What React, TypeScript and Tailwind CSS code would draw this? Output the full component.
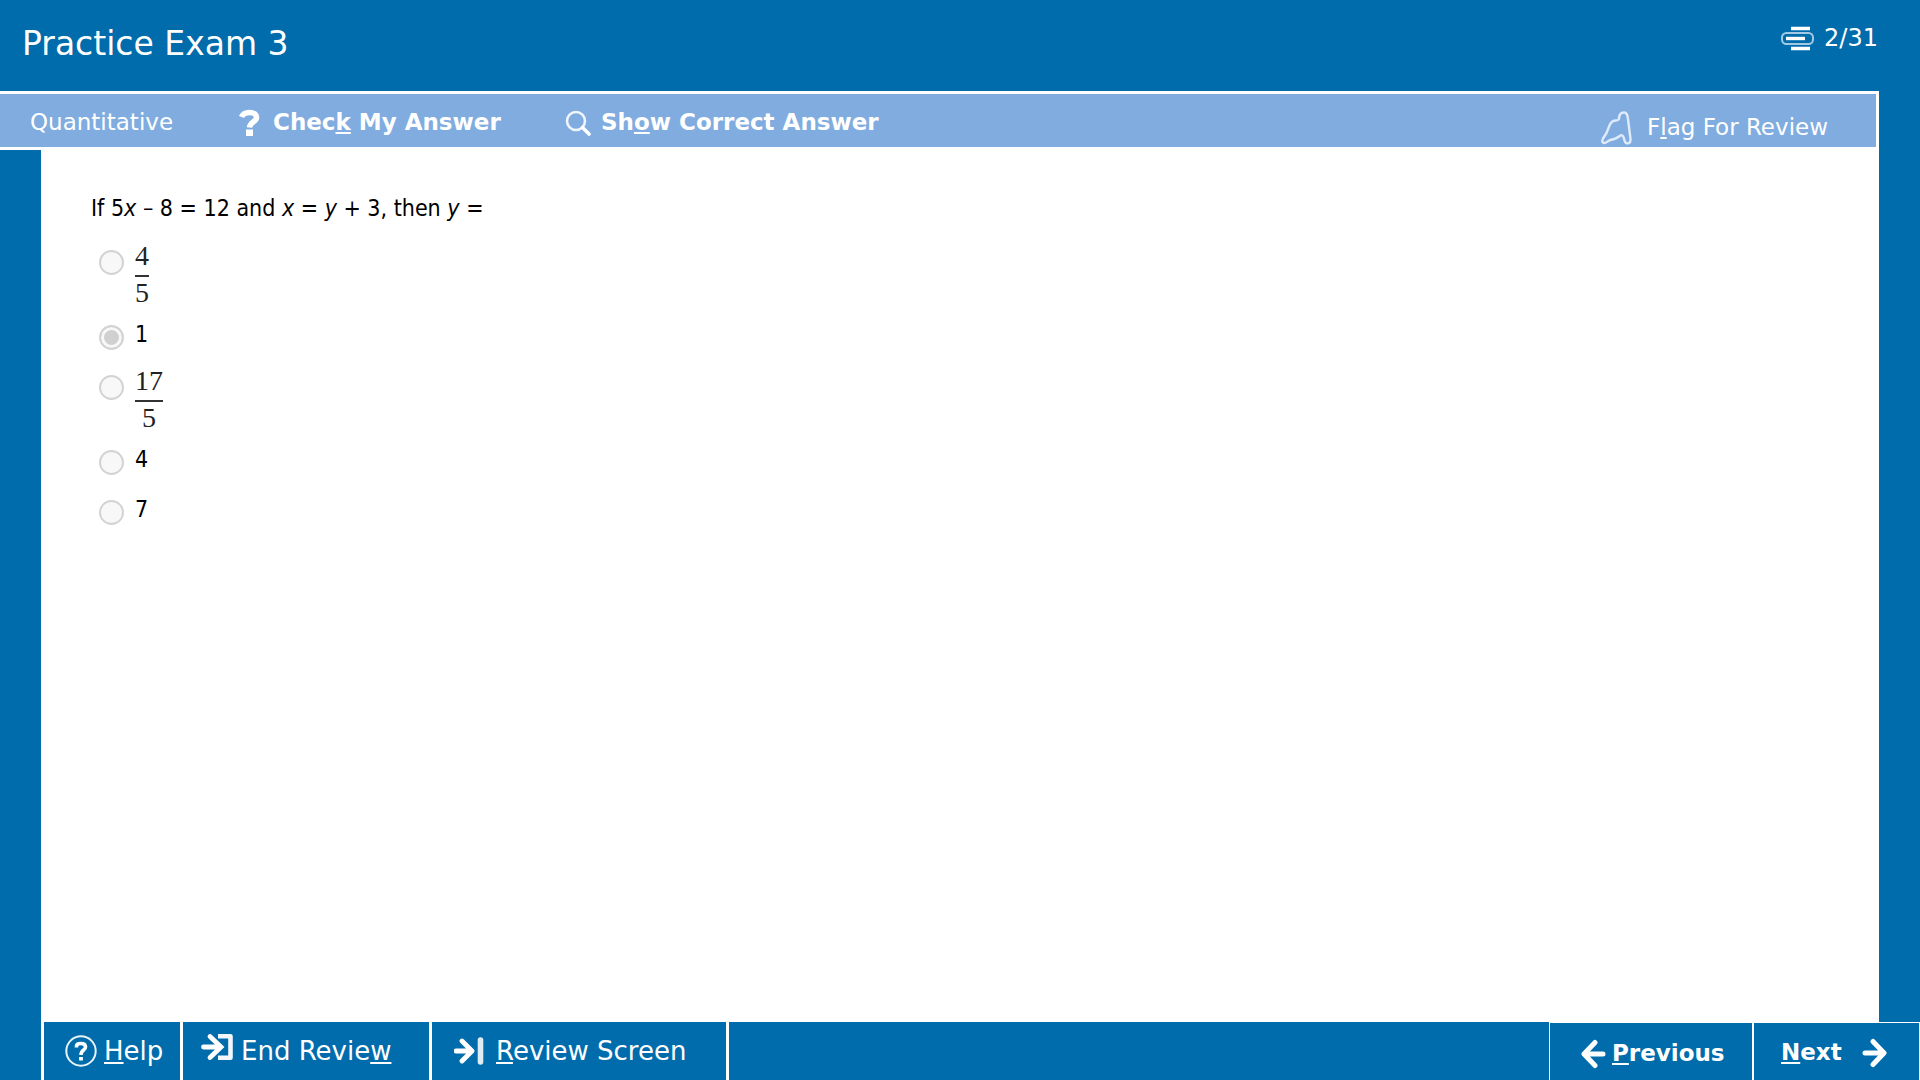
import React from 'react';

const choices = [
  { id: 'a', numerator: '4', denominator: '5' },
  { id: 'b', text: '1' },
  { id: 'c', numerator: '17', denominator: '5' },
  { id: 'd', text: '4' },
  { id: 'e', text: '7' },
];

const CounterIcon = () => (
  <svg width="34" height="28" viewBox="0 0 34 28" fill="none" aria-hidden="true">
    <path d="M11 4.5H30M11 24.5H30" stroke="#fff" strokeWidth="3.6" />
    <rect x="2" y="9" width="31" height="11" rx="4.5" stroke="#a3c9e2" strokeWidth="2" />
    <path d="M6 14.5H25" stroke="#fff" strokeWidth="3.4" />
  </svg>
);

const QuestionIcon = () => (
  <svg width="22" height="28" viewBox="0 0 22 28" fill="none" aria-hidden="true">
    <path d="M2.5 8C4 4.5 7 3.5 10.5 3.5C15 3.5 17.5 5.5 17.5 8.5C17.5 13 11 12.5 10.5 18.5" stroke="#fff" strokeWidth="5.6" />
    <rect x="7" y="20.5" width="7" height="6.5" fill="#fff" />
  </svg>
);

const SearchIcon = () => (
  <svg width="26" height="26" viewBox="0 0 26 26" fill="none" aria-hidden="true">
    <circle cx="11" cy="11" r="9" stroke="#eff5fc" strokeWidth="2.6" />
    <path d="M17.5 17.5L24 24" stroke="#fff" strokeWidth="3.6" strokeLinecap="round" />
  </svg>
);

const FlagIcon = () => (
  <svg width="32" height="34" viewBox="0 0 32 34" fill="none" aria-hidden="true">
    <path
      d="M18 8C18 3 20 1.5 23 1.5C26 1.5 26.5 4 27 8L29.5 28C30 32.5 26 33.5 24 31L22.5 26C21.5 23.5 20 24 18 25.5C15 28 12 28.5 9 29L5 31.5C1.5 33 .5 30.5 2 27.5L5.5 22L8.5 14.5C10 10.5 12 9.5 15 9.5C16.5 9.5 17.5 9 18 8Z"
      stroke="#dfeafa"
      strokeWidth="2.4"
      strokeLinejoin="round"
    />
  </svg>
);

const HelpIcon = () => (
  <svg width="32" height="32" viewBox="0 0 32 32" fill="none" aria-hidden="true">
    <circle cx="16" cy="16" r="14.7" stroke="#eaf3f8" strokeWidth="2" />
    <path d="M11.5 12.5V11C11.5 9 13.5 8.5 16 8.5C19 8.5 20.5 9.5 20.5 12C20.5 15.5 16 14.5 16 20" stroke="#fff" strokeWidth="3.6" />
    <path d="M16 22V25.5" stroke="#fff" strokeWidth="3.8" />
  </svg>
);

const EndIcon = () => (
  <svg width="33" height="28" viewBox="0 0 33 28" fill="none" aria-hidden="true">
    <path d="M2.5 14H19M9 3.5L20 14L9 24.5" stroke="#fff" strokeWidth="4.8" strokeLinecap="round" />
    <path d="M17 3.3H29.5V24.7H17" stroke="#f1f7fa" strokeWidth="4.6" strokeLinejoin="round" />
  </svg>
);

const ReviewIcon = () => (
  <svg width="30" height="28" viewBox="0 0 30 28" fill="none" aria-hidden="true">
    <path d="M2 14H17M8 4L18 14L8 24" stroke="#fff" strokeWidth="4.8" strokeLinecap="round" strokeLinejoin="round" />
    <path d="M26.5 3V25" stroke="#dcebf4" strokeWidth="5.6" strokeLinecap="round" />
  </svg>
);

const ArrowIcon = ({ left = false }: { left?: boolean }) => (
  <svg width="26" height="30" viewBox="0 0 26 30" fill="none" className={left ? 'rotate-180' : ''} aria-hidden="true">
    <path d="M3 15H20M11 3.5L22 15L11 26.5" stroke="#fff" strokeWidth="5" strokeLinecap="round" strokeLinejoin="round" />
  </svg>
);

const Key = ({ children }: { children: React.ReactNode }) => (
  <span className="underline decoration-2 underline-offset-2">{children}</span>
);

const App: React.FC = () => {
  return (
    <div className="flex min-h-screen flex-col bg-[#006cac] font-['Verdana','DejaVu_Sans',sans-serif] text-[23px] text-white">
      <header className="flex h-[91px] items-start justify-between pr-[42px] pl-[22px]">
        <h1 className="pt-6 text-[33px] leading-10">Practice Exam 3</h1>
        <div className="flex items-center gap-[10px] pt-[22px] text-2xl">
          <CounterIcon />
          <span>2/31</span>
        </div>
      </header>

      <div className="mr-[41px] flex h-[59px] items-center border-y-[3px] border-r-[3px] border-white bg-[#80acdf] pt-1 pr-12 pl-[30px]">
        <span className="w-[209px]">Quantitative</span>
        <button type="button" className="flex w-[326px] items-center gap-3 font-bold">
          <QuestionIcon />
          <span>Chec<Key>k</Key> My Answer</span>
        </button>
        <button type="button" className="flex items-center gap-[10px] font-bold">
          <SearchIcon />
          <span>Sh<Key>o</Key>w Correct Answer</span>
        </button>
        <button type="button" className="ml-auto flex items-center gap-[14px] pt-[10px]">
          <FlagIcon />
          <span>F<Key>l</Key>ag For Review</span>
        </button>
      </div>

      <main className="mx-[41px] flex-1 bg-white px-[50px] pt-10 text-black">
        <fieldset className="font-['Tahoma','DejaVu_Sans_Condensed','DejaVu_Sans',sans-serif] text-[23px] leading-[34px]">
          <legend className="leading-9">
            If 5<i>x</i> – 8 = 12 and <i>x</i> = <i>y</i> + 3, then <i>y</i> =
          </legend>
          <div className="pt-4 pl-2">
            {choices.map((choice) => (
              <div key={choice.id} className={choice.text ? 'flex h-[50px] gap-[11px]' : 'flex h-[75px] gap-[11px]'}>
                <input
                  type="radio"
                  id={choice.id}
                  name="answer"
                  disabled
                  defaultChecked={choice.id === 'b'}
                  className="mt-2 size-[25px] appearance-none rounded-full border-2 border-[#d3d3d3] bg-[#f8f8f8] checked:bg-[#d0d0d0] checked:shadow-[inset_0_0_0_3px_#f8f8f8]"
                />
                <label htmlFor={choice.id}>
                  {choice.text ?? (
                    <span className="flex flex-col text-center font-['Liberation_Serif',serif] text-[28px] leading-7 text-[#222]">
                      <span className="border-b-2 border-[#333] pb-[5px]">{choice.numerator}</span>
                      <span className="pt-[2px]">{choice.denominator}</span>
                    </span>
                  )}
                </label>
              </div>
            ))}
          </div>
        </fieldset>
      </main>

      <footer className="ml-[41px] flex h-[58px] border-l-[3px] border-white text-[26px]">
        <button type="button" className="flex w-[139px] items-center gap-[7px] border-r-[3px] border-white pl-[21px]">
          <HelpIcon />
          <span><Key>H</Key>elp</span>
        </button>
        <button type="button" className="flex w-[249px] items-center gap-[7px] border-r-[3px] border-white pl-[18px]">
          <span className="pb-2"><EndIcon /></span>
          <span>End Revie<Key>w</Key></span>
        </button>
        <button type="button" className="flex w-[297px] items-center gap-3 border-r-[3px] border-white pl-[22px]">
          <ReviewIcon />
          <span><Key>R</Key>eview Screen</span>
        </button>
        <div className="ml-auto flex border-x border-t border-white text-[23px] font-bold">
          <button type="button" className="flex w-[204px] items-center gap-[6px] border-r-2 border-white pt-1 pl-[30px]">
            <ArrowIcon left />
            <span><Key>P</Key>revious</span>
          </button>
          <button type="button" className="flex w-[165px] items-center gap-5 pt-[2px] pl-[27px]">
            <span><Key>N</Key>ext</span>
            <ArrowIcon />
          </button>
        </div>
      </footer>
    </div>
  );
};

export default App;
